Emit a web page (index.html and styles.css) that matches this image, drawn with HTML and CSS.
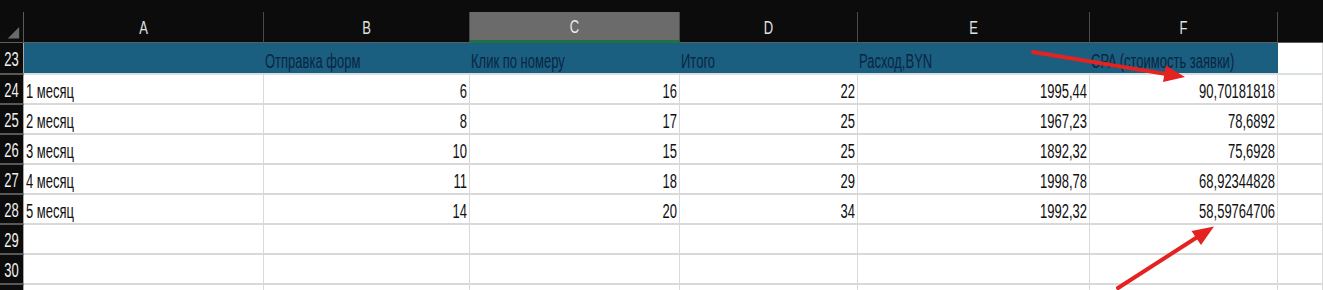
FILE: index.html
```html
<!DOCTYPE html>
<html lang="ru">
<head>
<meta charset="utf-8">
<title>Sheet</title>
<link rel="stylesheet" href="styles.css">
</head>
<body>
<div class="top"></div>
<div class="sheet">
  <div class="ch corner"><svg width="24" height="31" viewBox="0 0 24 31"><polygon points="8,27 20,27 20,15" fill="#6a6a6a"/></svg></div>
  <div class="ch"><span class="t">A</span></div>
  <div class="ch"><span class="t">B</span></div>
  <div class="ch sel"><span class="t">C</span></div>
  <div class="ch"><span class="t">D</span></div>
  <div class="ch"><span class="t">E</span></div>
  <div class="ch"><span class="t">F</span></div>
  <div class="ch last"></div>

  <div class="rh"><span class="t">23</span></div>
  <div class="hd"></div>
  <div class="hd"><span class="t">Отправка форм</span></div>
  <div class="hd"><span class="t">Клик по номеру</span></div>
  <div class="hd"><span class="t">Итого</span></div>
  <div class="hd"><span class="t">Расход,BYN</span></div>
  <div class="hd"><span class="t">CPA (стоимость заявки)</span></div>
  <div class="c hdg"></div>

  <div class="rh"><span class="t">24</span></div>
  <div class="c"><span class="t">1 месяц</span></div>
  <div class="c n"><span class="t">6</span></div>
  <div class="c n"><span class="t">16</span></div>
  <div class="c n"><span class="t">22</span></div>
  <div class="c n"><span class="t">1995,44</span></div>
  <div class="c n"><span class="t">90,70181818</span></div>
  <div class="c"></div>

  <div class="rh"><span class="t">25</span></div>
  <div class="c"><span class="t">2 месяц</span></div>
  <div class="c n"><span class="t">8</span></div>
  <div class="c n"><span class="t">17</span></div>
  <div class="c n"><span class="t">25</span></div>
  <div class="c n"><span class="t">1967,23</span></div>
  <div class="c n"><span class="t">78,6892</span></div>
  <div class="c"></div>

  <div class="rh"><span class="t">26</span></div>
  <div class="c"><span class="t">3 месяц</span></div>
  <div class="c n"><span class="t">10</span></div>
  <div class="c n"><span class="t">15</span></div>
  <div class="c n"><span class="t">25</span></div>
  <div class="c n"><span class="t">1892,32</span></div>
  <div class="c n"><span class="t">75,6928</span></div>
  <div class="c"></div>

  <div class="rh"><span class="t">27</span></div>
  <div class="c"><span class="t">4 месяц</span></div>
  <div class="c n"><span class="t">11</span></div>
  <div class="c n"><span class="t">18</span></div>
  <div class="c n"><span class="t">29</span></div>
  <div class="c n"><span class="t">1998,78</span></div>
  <div class="c n"><span class="t">68,92344828</span></div>
  <div class="c"></div>

  <div class="rh"><span class="t">28</span></div>
  <div class="c"><span class="t">5 месяц</span></div>
  <div class="c n"><span class="t">14</span></div>
  <div class="c n"><span class="t">20</span></div>
  <div class="c n"><span class="t">34</span></div>
  <div class="c n"><span class="t">1992,32</span></div>
  <div class="c n"><span class="t">58,59764706</span></div>
  <div class="c"></div>

  <div class="rh"><span class="t">29</span></div>
  <div class="c"></div><div class="c"></div><div class="c"></div><div class="c"></div><div class="c"></div><div class="c"></div><div class="c"></div>

  <div class="rh"><span class="t">30</span></div>
  <div class="c"></div><div class="c"></div><div class="c"></div><div class="c"></div><div class="c"></div><div class="c"></div><div class="c"></div>

  <div class="rh"></div>
  <div class="c"></div><div class="c"></div><div class="c"></div><div class="c"></div><div class="c"></div><div class="c"></div><div class="c"></div>
</div>
<svg class="arrows" width="1323" height="290" viewBox="0 0 1323 290">
  <line x1="1033" y1="52" x2="1168" y2="74.4" stroke="#e42320" stroke-width="4" stroke-linecap="round"/>
  <polygon points="1185,77 1163,82 1166,65.5" fill="#e42320"/>
  <line x1="1118" y1="288" x2="1199" y2="236" stroke="#e42320" stroke-width="4" stroke-linecap="round"/>
  <polygon points="1214,226.5 1201,245 1191.5,231" fill="#e42320"/>
</svg>
</body>
</html>
```
FILE: styles.css
```css
html, body {
  margin: 0;
  padding: 0;
  background: #ffffff;
  overflow: hidden;
}
body {
  width: 1323px;
  height: 290px;
  position: relative;
  font-family: "Liberation Sans", Arial, sans-serif;
  font-size: 13px;
}
.top {
  height: 12px;
  background: #0c0c0c;
}
.sheet {
  display: grid;
  grid-template-columns: 24px 240px 206px 210px 178px 232px 188px 1fr;
  grid-template-rows: 31px 32px repeat(8, 30px);
}
.sheet > div {
  box-sizing: border-box;
  display: flex;
  align-items: center;
  overflow: hidden;
  white-space: nowrap;
}
.t {
  display: inline-block;
  transform: scaleY(1.6);
  line-height: 15px;
}
.ch {
  background: #0c0c0c;
  color: #e2e2e2;
  border-right: 1px solid #4a4a4a;
  border-bottom: 1px solid #5e5e5e;
  justify-content: center;
}
.ch .t {
  transform: scaleY(1.35);
  font-size: 13px;
}
.ch.corner {
  border-right: 1px solid #5a5a5a;
  justify-content: flex-start;
}
.ch.corner svg {
  display: block;
}
.ch.sel {
  background: #6b6b6b;
  color: #ececec;
  border-bottom: 3px solid #1f7045;
}
.ch.last {
  border-right: none;
}
.rh {
  background: #0c0c0c;
  color: #f0f0f0;
  border-right: 1px solid #a8a8a8;
  border-bottom: 2px solid #585858;
  justify-content: center;
  padding-top: 2px;
  font-size: 13px;
}
.rh .t {
  transform: scaleY(1.5);
}
.hd {
  background: #1a5f7f;
  color: #0a2544;
  border-bottom: 2px solid #d8e0e4;
  padding-left: 1px;
  padding-top: 4px;
}
.hdg {
  border-bottom-color: #d8e0e4 !important;
}
.c {
  background: #ffffff;
  color: #111111;
  border-right: 1px solid #d9d9d9;
  border-bottom: 2px solid #d9d9d9;
  padding-left: 2px;
  padding-right: 2px;
  padding-top: 3px;
}
.c.n {
  justify-content: flex-end;
}
.arrows {
  position: absolute;
  left: 0;
  top: 0;
  pointer-events: none;
}
```
